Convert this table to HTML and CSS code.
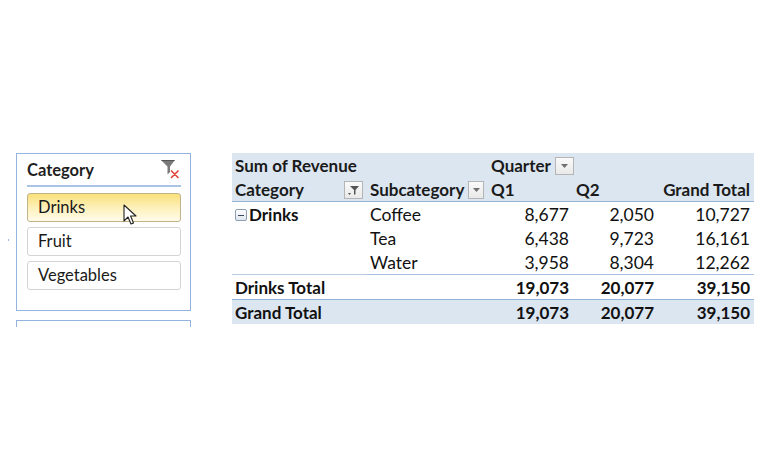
FILE: index.html
```html
<!DOCTYPE html>
<html>
<head>
<meta charset="utf-8">
<link rel="stylesheet" href="styles.css">
</head>
<body>
<div class="page">
  <div class="dot"></div>
  <div class="side">
    <div class="slicer">
      <div class="slicer-head">
        <span class="slicer-title">Category</span>
        <svg class="clear-icon" width="22" height="22" viewBox="0 0 22 22">
          <path d="M2 2 H16 L11 8.5 V14 L8.5 16.5 V8.5 Z" fill="#7a7a7a"/>
          <path d="M2.5 2.5 H15.5" stroke="#555" stroke-width="1"/>
          <path d="M12.5 13 L19 19.5 M19 13 L12.5 19.5" stroke="#e2483c" stroke-width="1.7" stroke-linecap="round"/>
        </svg>
      </div>
      <div class="items">
        <div class="item selected">Drinks
          <svg class="cursor" width="16" height="22" viewBox="0 0 16 22">
            <path d="M1 1 V17 L5 13 L8 20 L10.5 19 L7.6 12 H13 Z" fill="#ffffff" stroke="#222" stroke-width="1.1" stroke-linejoin="round"/>
          </svg>
        </div>
        <div class="item">Fruit</div>
        <div class="item">Vegetables</div>
      </div>
    </div>
    <div class="slicer2"></div>
  </div>
  <table class="pivot">
    <colgroup>
      <col class="c1"><col class="c2"><col class="c3"><col class="c4"><col class="c5">
    </colgroup>
    <tr class="hdr">
      <th colspan="2">Sum of Revenue</th>
      <th colspan="3"><span class="hcell">Quarter <span class="btn"><svg width="9" height="6" viewBox="0 0 9 6"><path d="M1 1 H8 L4.5 5 Z" fill="#6f6f6f"/></svg></span></span></th>
    </tr>
    <tr class="hdr hdr2">
      <th><span class="hcell spread">Category <span class="btn"><svg width="14" height="12" viewBox="0 0 14 12"><path d="M3 2 H12 L8.5 6 V10 L7 11 V6 Z" fill="#555"/><path d="M1 9 H4 L2.5 11 Z" fill="#555"/></svg></span></span></th>
      <th><span class="hcell spread">Subcategory <span class="btn"><svg width="9" height="6" viewBox="0 0 9 6"><path d="M1 1 H8 L4.5 5 Z" fill="#6f6f6f"/></svg></span></span></th>
      <th>Q1</th>
      <th>Q2</th>
      <th class="num">Grand Total</th>
    </tr>
    <tr>
      <td class="b"><span class="minus"></span>Drinks</td>
      <td class="sub">Coffee</td>
      <td class="num">8,677</td>
      <td class="num">2,050</td>
      <td class="num">10,727</td>
    </tr>
    <tr>
      <td></td>
      <td class="sub">Tea</td>
      <td class="num">6,438</td>
      <td class="num">9,723</td>
      <td class="num">16,161</td>
    </tr>
    <tr class="last">
      <td></td>
      <td class="sub">Water</td>
      <td class="num">3,958</td>
      <td class="num">8,304</td>
      <td class="num">12,262</td>
    </tr>
    <tr class="subtotal">
      <td class="b">Drinks Total</td>
      <td></td>
      <td class="num b">19,073</td>
      <td class="num b">20,077</td>
      <td class="num b">39,150</td>
    </tr>
    <tr class="grand">
      <td class="b">Grand Total</td>
      <td></td>
      <td class="num b">19,073</td>
      <td class="num b">20,077</td>
      <td class="num b">39,150</td>
    </tr>
  </table>
</div>
</body>
</html>
```

FILE: styles.css
```css
html, body {
  margin: 0;
  padding: 0;
  background: #ffffff;
}
body {
  width: 766px;
  height: 467px;
  overflow: hidden;
  font-family: Lato, "Open Sans", sans-serif;
  color: #111;
}
.page {
  position: relative;
  display: flex;
  align-items: flex-start;
  padding: 153px 0 0 16px;
  height: 314px;
  overflow: hidden;
}
.dot {
  position: absolute;
  left: 8px;
  top: 239px;
  width: 1px;
  height: 2px;
  background: #9cb9dd;
}
.side {
  width: 175px;
  display: flex;
  flex-direction: column;
  gap: 9px;
}
.slicer {
  box-sizing: border-box;
  height: 158px;
  border: 1.5px solid #92b4df;
  padding: 2px 9px 0 10px;
}
.slicer-head {
  display: flex;
  justify-content: space-between;
  align-items: center;
  height: 29px;
  border-bottom: 2px solid #a9c3e3;
}
.slicer-title {
  font-weight: 700;
  font-size: 16.5px;
  color: #1f1f1f;
  margin-top: -1px;
}
.clear-icon {
  margin-right: 0;
  margin-top: -3px;
}
.items {
  display: flex;
  flex-direction: column;
  gap: 5px;
  margin-top: 6px;
}
.item {
  position: relative;
  box-sizing: border-box;
  height: 29px;
  border: 1px solid #d4d4d4;
  border-radius: 3px;
  padding: 0 10px;
  font-size: 16.5px;
  line-height: 27px;
  color: #1a1a1a;
  background: #ffffff;
}
.item.selected {
  border-color: #bfb38a;
  background: linear-gradient(#f9e17a, #fef3c4 60%, #fffbe9);
}
.cursor {
  position: absolute;
  left: 95px;
  top: 10px;
}
.slicer2 {
  height: 6px;
  border: 1.5px solid #92b4df;
  border-bottom: none;
}
.pivot {
  margin-left: 41px;
  border-collapse: collapse;
  table-layout: fixed;
  width: 522px;
  font-size: 17px;
  color: #111;
}
.c1 { width: 135px; }
.c2 { width: 121px; }
.c3 { width: 85px; }
.c4 { width: 85px; }
.c5 { width: 96px; }
.pivot th, .pivot td {
  height: 22px;
  padding: 2px 4px 0 3px;
  text-align: left;
  white-space: nowrap;
  line-height: 20px;
}
.pivot td {
  font-size: 17.5px;
}
.pivot td.b {
  font-size: 17px;
}
.pivot th {
  font-weight: 700;
  color: #1a1a1a;
}
.hdr {
  background: #dce6f1;
}
.hdr2 th {
  border-bottom: 1px solid #95b3d7;
}
.hcell {
  display: flex;
  align-items: center;
  gap: 4px;
}
.hcell.spread {
  justify-content: space-between;
}
.btn {
  box-sizing: border-box;
  display: inline-flex;
  align-items: center;
  justify-content: center;
  width: 19px;
  height: 18px;
  border: 1px solid #b5b5b5;
  background: linear-gradient(#fafafa, #e9e9e9);
}
.pivot .num {
  text-align: right;
}
.pivot .b {
  font-weight: 700;
}
.pivot td.sub {
  padding-left: 3px;
}
.minus {
  display: inline-block;
  box-sizing: border-box;
  width: 12px;
  height: 12px;
  border: 1px solid #8c9fb6;
  border-radius: 2px;
  background: linear-gradient(#ffffff, #dfe6ee);
  margin-right: 2px;
  vertical-align: 0;
  position: relative;
}
.minus::after {
  content: "";
  position: absolute;
  left: 2px;
  right: 2px;
  top: 4.5px;
  height: 1px;
  background: #3b4a5c;
}
.last td {
  border-bottom: 1px solid #b8cce4;
}
.last td + td {
  border-bottom-color: #a6bfde;
}
.subtotal td {
  border-bottom: 1px solid #95b3d7;
}
.grand {
  background: #dce6f1;
}
```
